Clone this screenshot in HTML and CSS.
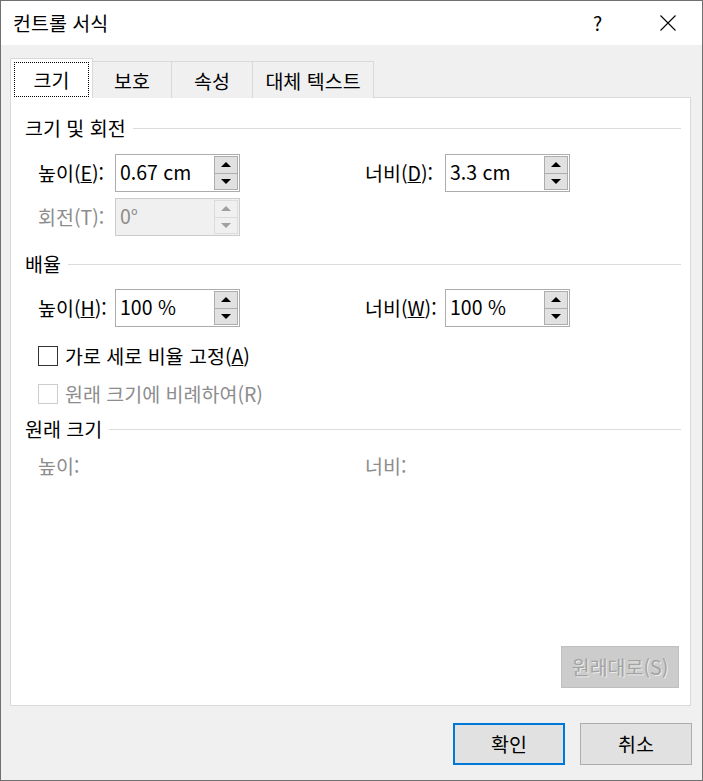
FILE: index.html
```html
<!DOCTYPE html>
<html lang="ko">
<head>
<meta charset="utf-8">
<title>컨트롤 서식</title>
<link rel="stylesheet" href="styles.css">
</head>
<body>
<div class="window">
  <div class="titlebar">
    <span class="title">컨트롤 서식</span>
    <span class="help">?</span>
    <span class="close">
      <svg width="16" height="16" viewBox="0 0 16 16"><path d="M0.5 0.5 L15.5 15.5 M15.5 0.5 L0.5 15.5" stroke="#000" stroke-width="1.1" fill="none"/></svg>
    </span>
  </div>
  <div class="client">
    <div class="tabs">
      <div class="tab active"><span class="focus">크기</span></div>
      <div class="tab t2">보호</div>
      <div class="tab t3">속성</div>
      <div class="tab t4">대체 텍스트</div>
    </div>
    <div class="panel">
      <div class="group-head h1"><span>크기 및 회전</span><i class="rule"></i></div>
      <div class="row r1">
        <span class="lbl">높이(<u>E</u>):</span>
        <div class="spin"><span class="val">0.67 cm</span><span class="btns"><span class="sb up"></span><span class="sb down"></span></span></div>
        <span></span>
        <span class="lbl">너비(<u>D</u>):</span>
        <div class="spin"><span class="val">3.3 cm</span><span class="btns"><span class="sb up"></span><span class="sb down"></span></span></div>
      </div>
      <div class="row r2">
        <span class="lbl dis">회전(T):</span>
        <div class="spin disabled"><span class="val">0°</span><span class="btns"><span class="sb up"></span><span class="sb down"></span></span></div>
      </div>
      <div class="group-head h2"><span>배율</span><i class="rule"></i></div>
      <div class="row r3">
        <span class="lbl">높이(<u>H</u>):</span>
        <div class="spin"><span class="val">100 %</span><span class="btns"><span class="sb up"></span><span class="sb down"></span></span></div>
        <span></span>
        <span class="lbl">너비(<u>W</u>):</span>
        <div class="spin"><span class="val">100 %</span><span class="btns"><span class="sb up"></span><span class="sb down"></span></span></div>
      </div>
      <div class="check c1"><span class="box"></span><span>가로 세로 비율 고정(<u>A</u>)</span></div>
      <div class="check c2 dis"><span class="box"></span><span>원래 크기에 비례하여(R)</span></div>
      <div class="group-head h3"><span>원래 크기</span><i class="rule"></i></div>
      <div class="row r4 dis">
        <span class="lbl">높이:</span>
        <span></span>
        <span></span>
        <span class="lbl">너비:</span>
      </div>
      <button class="reset">원래대로(S)</button>
    </div>
    <div class="footer">
      <button class="btn default">확인</button>
      <button class="btn">취소</button>
    </div>
  </div>
</div>
</body>
</html>
```
FILE: styles.css
```css
* { box-sizing: border-box; }
html, body { margin: 0; padding: 0; background: #f0f0f0; }
body {
  font-family: "Noto Sans CJK KR", sans-serif;
  font-size: 19.5px;
  line-height: 24px;
  color: #000;
}
.window {
  width: 703px;
  height: 781px;
  border: 1px solid #707070;
  display: flex;
  flex-direction: column;
  background: #f0f0f0;
}
.titlebar {
  height: 44px;
  background: #fff;
  display: flex;
  align-items: center;
  padding-left: 12px;
  flex: none;
}
.title { flex: 1; }
.help { width: 65px; margin-right: 2px; }
.close { width: 42px; height: 16px; display: flex; }
.close svg { display: block; }
.client {
  flex: 1;
  display: flex;
  flex-direction: column;
  padding: 13px 11px 0 9px;
}
.tabs {
  display: flex;
  align-items: flex-end;
  height: 40px;
  position: relative;
  z-index: 2;
  margin-bottom: -1px;
}
.tab {
  height: 37px;
  border: 1px solid #d9d9d9;
  border-bottom: none;
  background: #f0f0f0;
  display: flex;
  align-items: center;
  justify-content: center;
  margin-left: -1px;
  padding-top: 1px;
}
.tab.active {
  height: 40px;
  width: 83px;
  margin-left: 0;
  background: #fff;
  padding: 3px 3px 1px 3px;
  align-items: stretch;
}
.focus {
  flex: 1;
  border: 1px dotted #000;
  display: flex;
  align-items: center;
  justify-content: center;
}
.t2 { width: 80px; }
.t3 { width: 82px; }
.t4 { width: 122px; }
.panel {
  height: 609px;
  border: 1px solid #d9d9d9;
  background: #fff;
  display: flex;
  flex-direction: column;
  padding: 0 9px 17px 14px;
  position: relative;
  z-index: 1;
}
.group-head {
  display: flex;
  align-items: center;
  height: 24px;
}
.rule {
  flex: 1;
  height: 1px;
  background: #dcdcdc;
  margin-left: 7px;
}
.h1 { margin-top: 18px; }
.h2 { margin-top: 16px; }
.h3 { margin-top: 10px; }
.row {
  display: grid;
  grid-template-columns: 77px 125px 125px 80px 125px;
  align-items: center;
  height: 38px;
  padding-left: 13px;
}
.r1 { margin-top: 14px; }
.r2 { margin-top: 6px; }
.r3 { margin-top: 13px; }
.r4 { margin-top: 13px; height: 24px; }
.dis, .dis .lbl { color: #8d8d8d; }
.spin {
  height: 38px;
  border: 1px solid #acacac;
  background: #fff;
  display: flex;
}
.val {
  flex: 1;
  padding-left: 4px;
  display: flex;
  align-items: center;
  padding-bottom: 2px;
}
.btns {
  width: 26px;
  padding: 1px;
  display: flex;
  flex-direction: column;
}
.sb {
  flex: 1;
  background: #e1e1e1;
  border: 1px solid #adadad;
  display: flex;
  align-items: center;
  justify-content: center;
}
.sb.down { margin-top: -1px; }
.sb.up::before, .sb.down::before {
  content: "";
  width: 0;
  height: 0;
  border-left: 5px solid transparent;
  border-right: 5px solid transparent;
}
.sb.up::before { border-bottom: 5px solid #000; }
.sb.down::before { border-top: 5px solid #000; }
.spin.disabled { background: #f0f0f0; border-color: #cccccc; }
.spin.disabled .val { color: #8d8d8d; }
.spin.disabled .sb { background: #f0f0f0; border-color: #dcdcdc; }
.spin.disabled .sb.up::before { border-bottom-color: #a0a0a0; }
.spin.disabled .sb.down::before { border-top-color: #a0a0a0; }
.check {
  display: flex;
  align-items: center;
  height: 26px;
  padding-left: 13px;
}
.c1 { margin-top: 16px; }
.c2 { margin-top: 12px; }
.box {
  width: 20px;
  height: 20px;
  border: 1px solid #333;
  background: #fff;
  margin-right: 7px;
}
.c2 .box { border-color: #cccccc; }
.reset {
  margin-top: auto;
  align-self: flex-end;
  margin-right: 2px;
  width: 118px;
  height: 42px;
  background: #cccccc;
  border: 1px solid #bfbfbf;
  color: #a3a3a3;
  font: inherit;
  text-shadow: 1px 1px 0 #ececec;
  padding: 0;
}
.footer {
  display: flex;
  justify-content: flex-end;
  gap: 15px;
  margin-top: 17px;
  margin-right: -1px;
}
.btn {
  width: 112px;
  height: 42px;
  background: #e1e1e1;
  border: 1px solid #adadad;
  font: inherit;
  color: #000;
  padding: 0;
}
.btn.default { border: 2px solid #0078d7; }
```
